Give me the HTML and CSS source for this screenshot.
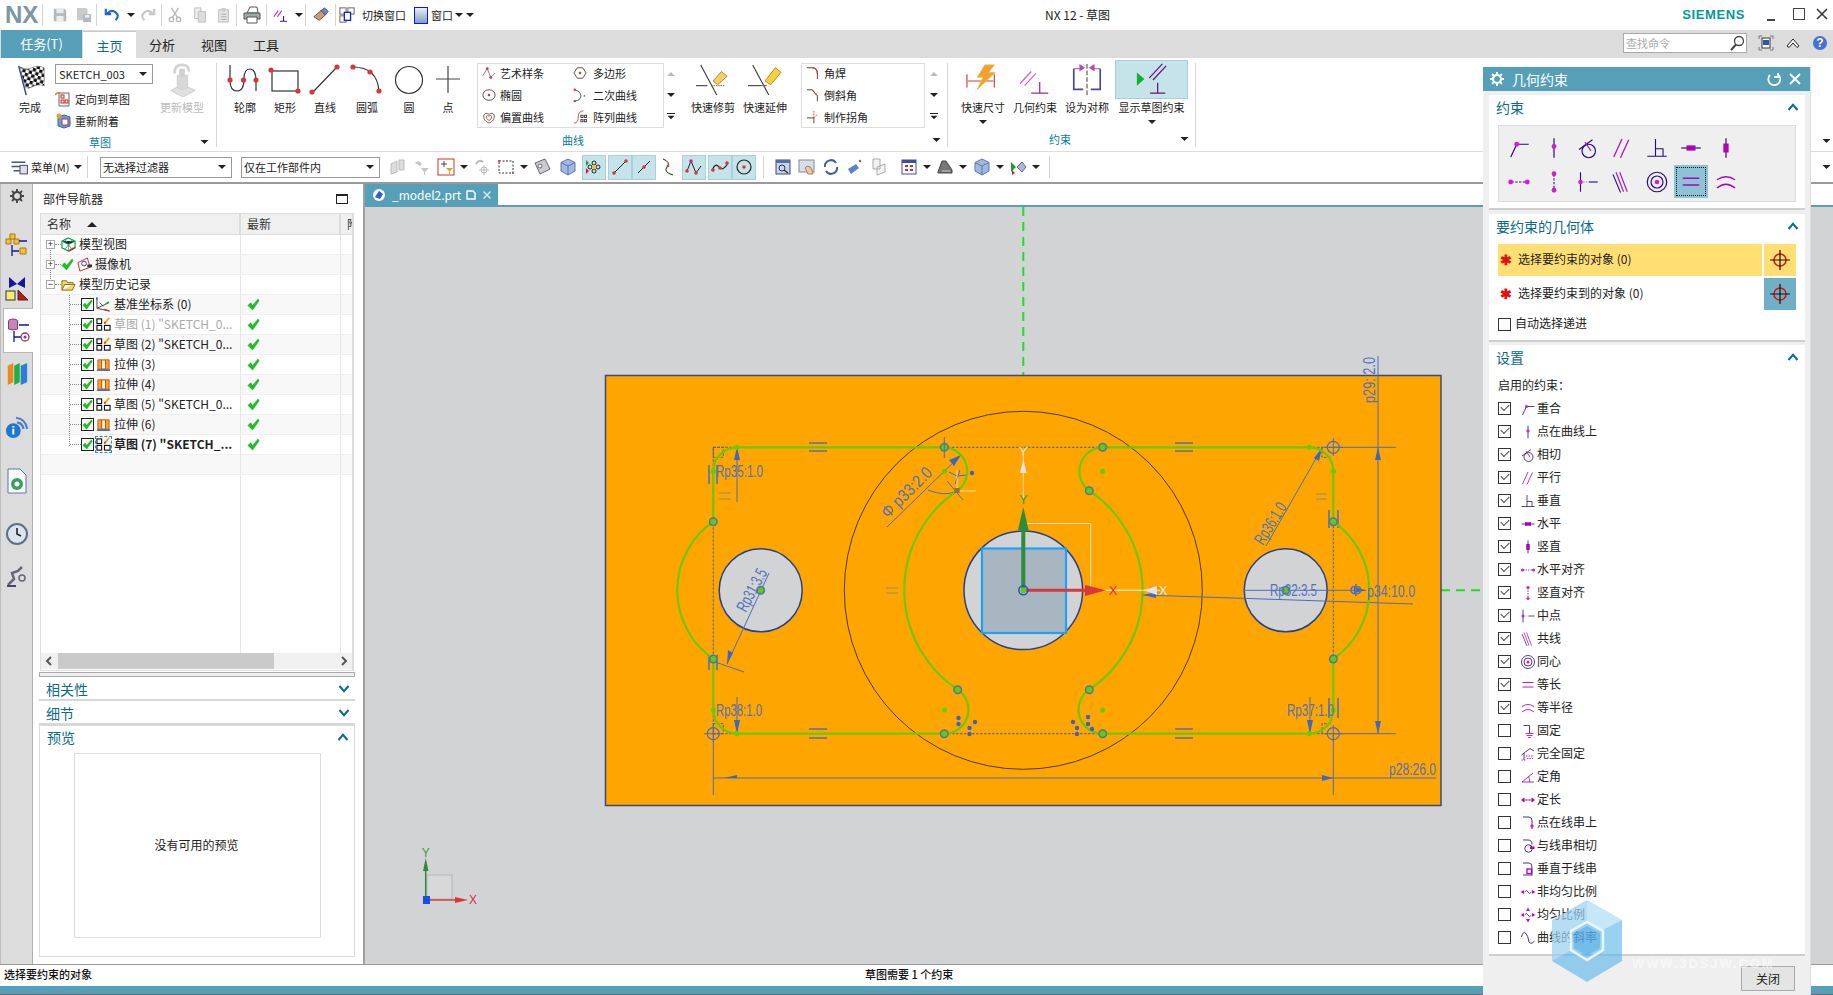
FILE: index.html
```html
<!DOCTYPE html>
<html lang="zh-CN">
<head>
<meta charset="utf-8">
<title>NX 12 - 草图</title>
<link rel="stylesheet" href="styles.css">
</head>
<body>
<svg class="sprite" xmlns="http://www.w3.org/2000/svg">
  <defs>
    <pattern id="chk" width="7" height="7" patternUnits="userSpaceOnUse" patternTransform="rotate(14)"><rect width="7" height="7" fill="#fff"/><rect width="3.500" height="3.500" fill="#111"/><rect x="3.500" y="3.500" width="3.500" height="3.500" fill="#111"/></pattern>
  </defs>
  <symbol id="c-coin" viewBox="0 0 32 32"><path d="M5 28 13 11H29" fill="none" stroke="#2a0a80" stroke-width="1.600"/><circle cx="13" cy="11" r="3.200" fill="#d818d8"/></symbol>
  <symbol id="c-onc" viewBox="0 0 32 32"><path d="M16 3V29" stroke="#2a0a80" stroke-width="1.600"/><circle cx="16" cy="14" r="3.200" fill="#d818d8"/></symbol>
  <symbol id="c-tan" viewBox="0 0 32 32"><circle cx="17" cy="20" r="9" fill="none" stroke="#2a0a80" stroke-width="1.600"/><path d="M4 18 22 5" stroke="#2a0a80" stroke-width="1.600"/><path d="M12 8 20 20" stroke="#a010c0" stroke-width="1.600"/></symbol>
  <symbol id="c-par" viewBox="0 0 32 32"><path d="M5 28 16 4M14 29 25 5" stroke="#a820b8" stroke-width="1.800"/></symbol>
  <symbol id="c-perp" viewBox="0 0 32 32"><path d="M3 27H29M14 4V27M14 17H24V27" fill="none" stroke="#2a0a80" stroke-width="1.500"/></symbol>
  <symbol id="c-hor" viewBox="0 0 32 32"><path d="M3 16H29" stroke="#2a0a80" stroke-width="1.600"/><rect x="10" y="12.500" width="12" height="7" fill="#b000b8"/></symbol>
  <symbol id="c-ver" viewBox="0 0 32 32"><path d="M16 3V29" stroke="#2a0a80" stroke-width="1.600"/><rect x="12.500" y="10" width="7" height="12" fill="#b000b8"/></symbol>
  <symbol id="c-hal" viewBox="0 0 32 32"><path d="M6 16H26" stroke="#2a0a80" stroke-width="1.400" stroke-dasharray="3 2"/><circle cx="5" cy="16" r="3.200" fill="#d818d8"/><circle cx="27" cy="16" r="3.200" fill="#d818d8"/></symbol>
  <symbol id="c-val" viewBox="0 0 32 32"><path d="M16 6V26" stroke="#2a0a80" stroke-width="1.400" stroke-dasharray="3 2"/><circle cx="16" cy="5" r="3.200" fill="#d818d8"/><circle cx="16" cy="27" r="3.200" fill="#d818d8"/></symbol>
  <symbol id="c-mid" viewBox="0 0 32 32"><path d="M6 3V29" stroke="#2a0a80" stroke-width="1.500"/><path d="M6 16H16" stroke="#777" stroke-width="1" stroke-dasharray="2 1.500"/><path d="M17 16H29" stroke="#2a0a80" stroke-width="1.500"/><circle cx="6" cy="16" r="3" fill="#d818d8"/></symbol>
  <symbol id="c-col" viewBox="0 0 32 32"><path d="M8 3 18 29M13 3 23 29" stroke="#a820b8" stroke-width="1.600"/><path d="M4 6 14 30" stroke="#2a0a80" stroke-width="1.400"/></symbol>
  <symbol id="c-con" viewBox="0 0 32 32"><circle cx="16" cy="16" r="13" fill="none" stroke="#2a0a80" stroke-width="1.600"/><circle cx="16" cy="16" r="8" fill="none" stroke="#2a0a80" stroke-width="1.600"/><circle cx="16" cy="16" r="3" fill="#d818d8"/></symbol>
  <symbol id="c-eq" viewBox="0 0 32 32"><path d="M5 11H27M5 20H27" stroke="#b000b8" stroke-width="1.800"/></symbol>
  <symbol id="c-eqr" viewBox="0 0 32 32"><path d="M4 13Q16 5 28 13M4 24Q16 14 28 24" fill="none" stroke="#b000b8" stroke-width="1.700"/></symbol>
  <symbol id="c-fix" viewBox="0 0 32 32"><path d="M7 5H19V21" fill="none" stroke="#2a0a80" stroke-width="1.600"/><path d="M11 21H27M13 25H25M16 29H22" stroke="#b000b8" stroke-width="1.600"/></symbol>
  <symbol id="c-ffx" viewBox="0 0 32 32"><path d="M3 18 20 5 28 10M8 14V28" fill="none" stroke="#2a0a80" stroke-width="1.600"/><path d="M12 20H28M14 25H26M3 28H12" stroke="#c010d0" stroke-width="1.800" stroke-dasharray="3 2"/></symbol>
  <symbol id="c-ang" viewBox="0 0 32 32"><path d="M4 26H28M4 26 26 8" fill="none" stroke="#b000b8" stroke-width="1.700"/><path d="M17 15Q20 20 19 26" fill="none" stroke="#b000b8" stroke-width="1.500"/></symbol>
  <symbol id="c-len" viewBox="0 0 32 32"><path d="M6 16H26" stroke="#b000b8" stroke-width="1.700"/><path d="M2 16 9 11V21ZM30 16 23 11V21Z" fill="#b000b8"/></symbol>
  <symbol id="c-ons" viewBox="0 0 32 32"><path d="M6 4H18Q24 4 24 12V28" fill="none" stroke="#2a0a80" stroke-width="1.700"/><circle cx="24" cy="22" r="3.400" fill="#d818d8"/></symbol>
  <symbol id="c-tns" viewBox="0 0 32 32"><path d="M6 4H16Q24 4 24 13" fill="none" stroke="#2a0a80" stroke-width="1.700"/><circle cx="17" cy="21" r="7.500" fill="none" stroke="#2a0a80" stroke-width="1.700"/><rect x="20" y="17" width="9" height="5" fill="#b000b8"/></symbol>
  <symbol id="c-pns" viewBox="0 0 32 32"><path d="M6 4H18Q24 4 24 12V29M6 28H24" fill="none" stroke="#2a0a80" stroke-width="1.700"/><rect x="14" y="16" width="9" height="9" fill="none" stroke="#b000b8" stroke-width="2.600"/></symbol>
  <symbol id="c-nus" viewBox="0 0 32 32"><path d="M9 16Q13 10 16 16T23 16" fill="none" stroke="#2a0a80" stroke-width="1.400"/><path d="M1 16 8 12V20ZM31 16 24 12V20Z" fill="#c010d0"/></symbol>
  <symbol id="c-uni" viewBox="0 0 32 32"><path d="M9 16Q13 10 16 16T23 16" fill="none" stroke="#2a0a80" stroke-width="1.400"/><path d="M1 16 8 12V20ZM31 16 24 12V20ZM16 1 12 8H20ZM16 31 12 24H20Z" fill="#c010d0"/></symbol>
  <symbol id="c-slp" viewBox="0 0 32 32"><path d="M3 14Q6 2 11 6T18 24Q22 30 29 22" fill="none" stroke="#2a0a80" stroke-width="1.700"/></symbol>
  <symbol id="ck" viewBox="0 0 14 14"><path d="M1 8 4 5 6 8 12 1 13 3 6 13Z" fill="#19c21e" stroke="#0f9a18" stroke-width=".5"/></symbol>
  <symbol id="sk" viewBox="0 0 16 16"><rect x="1" y="2" width="5" height="5" fill="none" stroke="#111" stroke-width="1.200"/><rect x="1" y="9" width="5" height="5" fill="none" stroke="#111" stroke-width="1.200"/><rect x="9" y="9" width="6" height="5" fill="none" stroke="#111" stroke-width="1.200"/><path d="M9 7 14 1" stroke="#e8b020" stroke-width="2.200"/><path d="M9 7 10 5" stroke="#d33" stroke-width="1.500"/></symbol>
  <symbol id="ex" viewBox="0 0 16 16"><path d="M2 3H14V13H2Z" fill="#f6a030" stroke="#d06010"/><path d="M6 3V13M10 3V13" stroke="#b05010"/><path d="M6.500 4H9.500V12H6.500Z" fill="#fff6d8"/><path d="M1 14H15" stroke="#2060d0" stroke-width="1.600"/></symbol>
  <symbol id="drop" viewBox="0 0 8 8"><path d="M0 2H8L4 6Z" fill="#222"/></symbol>
  <symbol id="cu" viewBox="0 0 12 8"><path d="M1.500 7 6 1.800 10.500 7" fill="none" stroke="#0a6c88" stroke-width="2"/></symbol>
  <symbol id="cd" viewBox="0 0 12 8"><path d="M1.500 1 6 6.200 10.500 1" fill="none" stroke="#0a6c88" stroke-width="2"/></symbol>
  <symbol id="cross" viewBox="0 0 20 20"><circle cx="10" cy="10" r="5.500" fill="none" stroke="#e01010" stroke-width="1.400"/><path d="M10 1V19M1 10H19" stroke="#111" stroke-width="1.100"/></symbol>
  <symbol id="gear" viewBox="0 0 16 16"><circle cx="8" cy="8" r="4.600" fill="none" stroke="currentColor" stroke-width="2.400"/><path d="M8 0V3M8 13V16M0 8H3M13 8H16M2.300 2.300 4.400 4.400M11.600 11.600 13.700 13.700M13.700 2.300 11.600 4.400M4.400 11.600 2.300 13.700" stroke="currentColor" stroke-width="2.200"/></symbol>
  <symbol id="box3d" viewBox="0 0 18 18"><path d="M9 1 16 4.500V13L9 17 2 13V4.500Z" fill="#9fb9e2" stroke="#5a76b0"/><path d="M2 4.500 9 8 16 4.500M9 8V17" fill="none" stroke="#5a76b0"/></symbol>
</svg>

<header class="titlebar">
  <span class="nx">NX</span><i class="sep"></i>
  <span class="qi qi-first"><svg viewBox="0 0 18 18" class="ic16"><path d="M2 2H14L16 4V16H2Z" fill="#b4b8bb"/><rect x="5" y="2" width="8" height="5" fill="#e7e9ea"/><rect x="5" y="10" width="8" height="6" fill="#eceeef"/></svg></span>
  <span class="qi"><svg viewBox="0 0 18 18" class="ic16"><path d="M1 1H11L13 3V9H9V15H1Z" fill="#c8cbce"/><rect x="8" y="8" width="9" height="9" fill="#b4b8bb"/><rect x="10" y="9" width="5" height="3" fill="#eee"/></svg></span><i class="sep"></i>
  <span class="qi qi-30"><svg viewBox="0 0 18 18" class="ic16"><path d="M2 2V8H8M3 8Q8 2 13 6T13 15" fill="none" stroke="#1768c8" stroke-width="2.400"/></svg></span>
  <svg class="dr dr-8"><use href="#drop"/></svg>
  <span class="qi qi-26"><svg viewBox="0 0 18 18" class="ic16"><path d="M16 2V8H10M15 8Q10 2 5 6T5 15" fill="none" stroke="#c4c8cb" stroke-width="2.400"/></svg></span><i class="sep"></i>
  <span class="qi qi-26"><svg viewBox="0 0 18 18" class="ic16"><path d="M13 1 6 12M5 1 12 12" stroke="#b8bcbe" stroke-width="1.600"/><circle cx="5" cy="14" r="2.500" fill="none" stroke="#b8bcbe" stroke-width="1.500"/><circle cx="13" cy="14" r="2.500" fill="none" stroke="#b8bcbe" stroke-width="1.500"/></svg></span>
  <span class="qi"><svg viewBox="0 0 18 18" class="ic16"><path d="M3 1H10V13H3Z" fill="#eee" stroke="#bbb"/><path d="M7 5H15V17H7Z" fill="#ddd" stroke="#bbb"/></svg></span>
  <span class="qi"><svg viewBox="0 0 18 18" class="ic16"><path d="M3 3H14V17H3Z" fill="#e4e4e4" stroke="#bbb"/><rect x="6" y="1" width="5" height="4" fill="#ccc"/><path d="M6 8H12M6 11H12M6 14H12" stroke="#aaa"/></svg></span><i class="sep"></i>
  <span class="qi qi-29"><svg viewBox="0 0 20 18" class="ic18"><path d="M5 7 8 1H15L16 7Z" fill="#fff" stroke="#555"/><path d="M2 7H18V13H2Z" fill="#9aa" stroke="#555"/><path d="M5 11H15V17H5Z" fill="#fff" stroke="#555"/></svg></span><i class="sep"></i>
  <span class="qi qi-26"><svg viewBox="0 0 18 18" class="ic16"><path d="M2 11 7 4M6 11 11 4" stroke="#c030d0" stroke-width="1.300"/><path d="M9 16H17M13 10V16" stroke="#3a10a0" stroke-width="1.200"/></svg></span>
  <svg class="dr dr-12"><use href="#drop"/></svg><i class="sep"></i>
  <span class="qi qi-29"><svg viewBox="0 0 18 18" class="ic16"><path d="M1 11 9 4 14 9 7 15Z" fill="#c8a070" stroke="#555"/><path d="M9 4 13 1 17 5 14 9Z" fill="#7084c8" stroke="#446"/></svg></span><i class="sep"></i>
  <span class="qi qi-22"><svg viewBox="0 0 18 18" class="ic16"><rect x="1" y="1" width="7" height="7" fill="#fff" stroke="#555"/><rect x="10" y="1" width="7" height="7" fill="#fff" stroke="#555"/><rect x="1" y="10" width="7" height="7" fill="#fff" stroke="#555"/><rect x="6" y="6" width="7" height="9" fill="#fff" stroke="#1414d8" stroke-width="1.400"/></svg></span>
  <span class="tb-text tb-text-1">切换窗口</span>
  <span class="win-ic"></span>
  <span class="tb-text tb-text-2">窗口</span>
  <svg class="dr dr-12"><use href="#drop"/></svg>
  <span class="more"><svg class="dr dr-8"><use href="#drop"/></svg></span>
  <span class="app-title">NX 12 - 草图</span>
  <span class="siemens">SIEMENS</span>
  <span class="winbtn-min"></span>
  <span class="winbtn-max"></span>
  <svg class="winbtn-close" viewBox="0 0 12 12"><path d="M1 1 11 11M11 1 1 11" stroke="#333" stroke-width="1.500"/></svg>
</header>

<nav class="tabbar">
  <span class="tab-task">任务(T)</span>
  <span class="tab tab-active">主页</span>
  <span class="tab">分析</span>
  <span class="tab">视图</span>
  <span class="tab">工具</span>
  <div class="search"><span>查找命令</span><svg viewBox="0 0 16 16"><circle cx="10" cy="6" r="4.500" fill="#fff" stroke="#444" stroke-width="1.300"/><path d="M7 9.500 2 15" stroke="#444" stroke-width="2"/></svg></div>
  <svg class="tb-ic" viewBox="0 0 16 16"><path d="M1 4V1H4M12 1H15V4M15 12V15H12M4 15H1V12" fill="none" stroke="#777"/><rect x="4" y="3" width="8" height="10" fill="#fff" stroke="#334"/><rect x="5" y="5" width="6" height="5" fill="#2a5aa0"/></svg>
  <svg class="tb-ic" viewBox="0 0 16 16"><path d="M2 11 8 4 14 11 12 12.500 8 8 4 12.500Z" fill="#fff" stroke="#222"/></svg>
  <svg class="tb-ic tb-help" viewBox="0 0 16 16"><circle cx="8" cy="8" r="7" fill="#4070d8"/><text x="8" y="12" text-anchor="middle" class="help-q">?</text></svg>
</nav>

<section class="ribbon">
  <div class="group g-sketch">
    <div class="gbody">
      <div class="tool t-finish">
        <svg class="ticon" viewBox="0 0 34 36"><path d="M5 3 13 34" stroke="#3a3ab0" stroke-width="1.500"/><path d="M6 4Q14 8 19 5T32 5L32 24Q24 22 20 25T12 26Z" fill="url(#chk)" stroke="#555" stroke-width=".5"/></svg>
        <span class="tlabel">完成</span>
      </div>
      <div class="sk-col">
        <div class="select select-sk"><span>SKETCH_003</span><svg><use href="#drop"/></svg></div>
        <div class="sk-item"><svg viewBox="0 0 16 16"><path d="M4 2H14V15H4Z" fill="#fff" stroke="#666"/><rect x="6" y="4" width="3" height="3" fill="none" stroke="#c22"/><rect x="6" y="9" width="3" height="3" fill="none" stroke="#c22"/><rect x="10" y="9" width="3" height="3" fill="none" stroke="#c22"/><path d="M0 4Q2 1 5 2" fill="none" stroke="#e08020" stroke-width="1.500"/></svg><span>定向到草图</span></div>
        <div class="sk-item"><svg viewBox="0 0 16 16"><path d="M3 4 9 2 15 4V13L9 15 3 13Z" fill="#5f9ed8" stroke="#3a6a9f"/><path d="M7 6H13V12H7Z" fill="#fff" stroke="#c33"/><circle cx="4" cy="3" r="2.500" fill="#e8a030"/></svg><span>重新附着</span></div>
      </div>
      <div class="tool t-update">
        <svg class="ticon" viewBox="0 0 34 36"><path d="M5 29 17 23 31 29 18 36Z" fill="#e0e0e0" stroke="#ccc"/><path d="M12 13H23V26L18 28 12 26Z" fill="#d8d8d8" stroke="#ccc"/><path d="M9 11Q9 2 17 2T24 9" fill="none" stroke="#d4d4d4" stroke-width="3"/><rect x="14" y="6" width="6" height="9" fill="#cfcfcf"/></svg>
        <span class="tlabel tlabel-off">更新模型</span>
      </div>
    </div>
    <div class="gfoot foot-sketch"><span>草图</span><svg class="dr dr-f"><use href="#drop"/></svg></div>
  </div>

  <div class="group g-curve">
    <div class="gbody">
      <div class="tool t-40"><svg class="ticon" viewBox="0 0 36 34"><path d="M3 2V17Q3 28 10 28T17 16Q17 6 23 6T29 18V28" fill="none" stroke="#333" stroke-width="1.200"/><circle cx="3" cy="17" r="2.600" fill="#d23a3a"/><circle cx="16.500" cy="17" r="2.600" fill="#d23a3a"/><circle cx="29" cy="17" r="2.600" fill="#d23a3a"/></svg><span class="tlabel">轮廓</span></div>
      <div class="tool t-40"><svg class="ticon" viewBox="0 0 36 34"><rect x="5" y="8" width="26" height="20" fill="none" stroke="#333" stroke-width="1.200"/><circle cx="4" cy="7" r="2.600" fill="#d23a3a"/><circle cx="31" cy="28" r="2.600" fill="#d23a3a"/></svg><span class="tlabel">矩形</span></div>
      <div class="tool t-40"><svg class="ticon" viewBox="0 0 36 34"><path d="M6 29 30 4" stroke="#333" stroke-width="1.200"/><circle cx="5" cy="29" r="2.600" fill="#d23a3a"/><circle cx="30" cy="4" r="2.600" fill="#d23a3a"/></svg><span class="tlabel">直线</span></div>
      <div class="tool t-44"><svg class="ticon" viewBox="0 0 36 34"><path d="M4 4Q28 4 30 28" fill="none" stroke="#333" stroke-width="1.200"/><circle cx="4" cy="4" r="2.600" fill="#d23a3a"/><circle cx="21" cy="9" r="2.600" fill="#d23a3a"/><circle cx="30" cy="28" r="2.600" fill="#d23a3a"/></svg><span class="tlabel">圆弧</span></div>
      <div class="tool t-40"><svg class="ticon" viewBox="0 0 36 34"><circle cx="18" cy="17" r="13.500" fill="none" stroke="#333" stroke-width="1.200"/></svg><span class="tlabel">圆</span></div>
      <div class="tool t-38"><svg class="ticon" viewBox="0 0 36 34"><path d="M18 3V30M6 16H30" stroke="#444" stroke-width="1.200"/></svg><span class="tlabel">点</span></div>
      <div class="gallery gal-1">
        <div class="gal-item"><svg viewBox="0 0 16 16"><path d="M1 11 6 3 10 13 15 8" fill="none" stroke="#777"/><circle cx="6" cy="3" r="1.600" fill="#d23a3a"/><circle cx="10" cy="13" r="1.600" fill="#d23a3a"/></svg><span>艺术样条</span></div>
        <div class="gal-item"><svg viewBox="0 0 16 16"><path d="M5 2H11L15 8 11 14H5L1 8Z" fill="none" stroke="#444"/><circle cx="8" cy="8" r="1.500" fill="#d23a3a"/></svg><span>多边形</span></div>
        <div class="gal-item"><svg viewBox="0 0 16 16"><ellipse cx="8" cy="8" rx="7" ry="6" fill="none" stroke="#444"/><circle cx="8" cy="8" r="1.500" fill="#d23a3a"/></svg><span>椭圆</span></div>
        <div class="gal-item"><svg viewBox="0 0 16 16"><path d="M2 2Q9 4 9 9T2 15" fill="none" stroke="#444"/><circle cx="2" cy="2" r="1.400" fill="#d23a3a"/><circle cx="2" cy="15" r="1.400" fill="#d23a3a"/><circle cx="13" cy="9" r="1" fill="#777"/></svg><span>二次曲线</span></div>
        <div class="gal-item"><svg viewBox="0 0 16 16"><path d="M8 15Q1 12 2 6 4 2 8 5 12 2 14 6 15 12 8 15Z" fill="none" stroke="#555"/><path d="M8 12Q4 10 5 7 6 5 8 7 10 5 11 7 12 10 8 12Z" fill="none" stroke="#d23a3a"/></svg><span>偏置曲线</span></div>
        <div class="gal-item"><svg viewBox="0 0 16 16"><path d="M1 15Q6 15 6 8T12 1" fill="none" stroke="#d23a3a"/><g fill="none" stroke="#333"><rect x="9" y="6" width="2.500" height="2.500"/><rect x="13" y="6" width="2.500" height="2.500"/><rect x="9" y="11" width="2.500" height="2.500"/><rect x="13" y="11" width="2.500" height="2.500"/></g></svg><span>阵列曲线</span></div>
      </div>
      <div class="gal-arrows gal-arrows-1"><svg class="up"><use href="#drop"/></svg><svg><use href="#drop"/></svg><svg class="mr"><use href="#drop"/></svg></div>
      <div class="tool t-52 t-trim"><svg class="ticon" viewBox="0 0 36 36"><path d="M5 2 22 34" stroke="#333" stroke-width="1.100"/><path d="M0 24H12" stroke="#333" stroke-width="1.100"/><path d="M16 24H30" stroke="#555" stroke-width="1" stroke-dasharray="1.500 1"/><path d="M18 19 27 9 33 14 23 23Z" fill="#f2d060" stroke="#c08030"/></svg><span class="tlabel">快速修剪</span></div>
      <div class="tool t-52"><svg class="ticon" viewBox="0 0 36 36"><path d="M5 2 22 34" stroke="#333" stroke-width="1.100"/><path d="M0 24H14" stroke="#333" stroke-width="1.100"/><path d="M14 24H20" stroke="#c33" stroke-width="1.100"/><path d="M18 19 29 5 35 10 24 23Z" fill="#f4d23a" stroke="#c08030"/></svg><span class="tlabel">快速延伸</span></div>
      <div class="gallery gal-2">
        <div class="gal-item"><svg viewBox="0 0 16 16"><path d="M1 2H7Q13 2 13 9V15" fill="none" stroke="#333"/><path d="M7 2Q13 2 13 9" fill="none" stroke="#d23a3a" stroke-width="1.300"/></svg><span>角焊</span></div>
        <div class="gal-item"><svg viewBox="0 0 16 16"><path d="M1 2H7L13 9V15" fill="none" stroke="#333"/><path d="M7 2 13 9" fill="none" stroke="#d23a3a" stroke-width="1.300" stroke-dasharray="2 1"/></svg><span>倒斜角</span></div>
        <div class="gal-item"><svg viewBox="0 0 16 16"><path d="M1 9H9V15" fill="none" stroke="#333"/><path d="M9 9 13 5M9 1V9" stroke="#d23a3a" stroke-dasharray="2 1"/></svg><span>制作拐角</span></div>
      </div>
      <div class="gal-arrows gal-arrows-2"><svg class="up"><use href="#drop"/></svg><svg><use href="#drop"/></svg><svg class="mr"><use href="#drop"/></svg></div>
    </div>
    <div class="gfoot foot-curve"><span>曲线</span><svg class="dr dr-f"><use href="#drop"/></svg></div>
  </div>

  <div class="group g-con">
    <div class="gbody">
      <div class="tool t-52"><svg class="ticon" viewBox="0 0 36 36"><path d="M1 12V26M30 12V26M2 19H29" stroke="#d23a3a" stroke-width="1.200"/><path d="M20 2H30L24 10H31L12 28 18 15H12Z" fill="#f0a030" stroke="#e8c040"/></svg><span class="tlabel">快速尺寸</span><svg class="dr dr-t"><use href="#drop"/></svg></div>
      <div class="tool t-52"><svg class="ticon" viewBox="0 0 36 36"><path d="M2 22 14 9M7 24 19 11" stroke="#cf60d8" stroke-width="1.300"/><path d="M14 32H32M23 20V32" stroke="#a020b0" stroke-width="1.300"/></svg><span class="tlabel">几何约束</span></div>
      <div class="tool t-52"><svg class="ticon" viewBox="0 0 36 36"><path d="M4 6V28H14M32 6V28H22" fill="none" stroke="#4a4a9a" stroke-width="1.800"/><path d="M4 6H12M32 6H24" stroke="#8888a8" stroke-width="1.200"/><path d="M18 1V35" stroke="#333" stroke-width="1" stroke-dasharray="5 2"/><path d="M10 1V9L16 5ZM26 1V9L20 5Z" fill="#c040c8"/></svg><span class="tlabel">设为对称</span></div>
      <div class="tool tool-on"><span class="on-bg"><svg class="ticon" viewBox="0 0 36 36"><path d="M2 10V24L10 17Z" fill="#10b030"/><path d="M15 16 29 1M19 18 33 3" stroke="#6a1078" stroke-width="1.300"/><path d="M16 32H32M24 21V32" stroke="#6a1078" stroke-width="1.300"/></svg></span><span class="tlabel">显示草图约束</span><svg class="dr dr-t"><use href="#drop"/></svg></div>
    </div>
    <div class="gfoot foot-con"><span>约束</span><svg class="dr dr-f"><use href="#drop"/></svg></div>
  </div>
  <svg class="dr dr-end"><use href="#drop"/></svg>
</section>

<section class="selbar">
  <svg class="menu-ic" viewBox="0 0 18 16"><path d="M1 3H14M1 7H12M3 11H14" stroke="#457" stroke-width="1.500"/><rect x="9" y="6" width="7" height="8" fill="#dde" stroke="#556"/></svg>
  <span class="menu-text">菜单(M)</span>
  <svg class="dr dr-12"><use href="#drop"/></svg>
  <i class="sep sep-menu"></i>
  <div class="select select-f1"><span>无选择过滤器</span><svg><use href="#drop"/></svg></div>
  <div class="select select-f2"><span>仅在工作部件内</span><svg><use href="#drop"/></svg></div>
  <span class="si si-first"><svg viewBox="0 0 18 18"><path d="M2 6 8 3V14L2 16ZM10 2H15V12H10Z" fill="#ddd" stroke="#bbb"/></svg></span>
  <span class="si"><svg viewBox="0 0 18 18"><path d="M2 5Q6 1 9 6L7 8 4 6ZM8 10H16L12 14V17H11V14Z" fill="#c4c4c4"/></svg></span>
  <span class="si"><svg viewBox="0 0 18 18"><rect x="1" y="1" width="16" height="16" fill="#fff" stroke="#c33"/><path d="M7 3V9M4 6H10" stroke="#444"/><path d="M9 10H16L13 13V16H12V13Z" fill="#e8a020"/></svg></span>
  <svg class="dr dr-12"><use href="#drop"/></svg>
  <span class="si"><svg viewBox="0 0 18 18"><path d="M3 6Q6 1 10 4" fill="none" stroke="#bbb" stroke-width="2"/><circle cx="11" cy="12" r="3" fill="none" stroke="#bbb"/><path d="M11 7V17M6 12H16" stroke="#bbb"/></svg></span>
  <span class="si"><svg viewBox="0 0 18 18"><rect x="2" y="3" width="14" height="12" fill="none" stroke="#333" stroke-dasharray="2 1.500"/><circle cx="2" cy="3" r="1" fill="#c33"/><circle cx="16" cy="15" r="1" fill="#c33"/></svg></span>
  <svg class="dr dr-12"><use href="#drop"/></svg>
  <span class="si"><svg viewBox="0 0 18 18"><path d="M2 5 12 1 17 11 7 16Z" fill="#ccc" stroke="#667"/><circle cx="7" cy="8" r="2" fill="#fff" stroke="#667"/></svg></span>
  <span class="si si-m2"><svg viewBox="0 0 18 18"><use href="#box3d"/></svg></span>
  <span class="si si-m2 si-on"><svg viewBox="0 0 18 18"><circle cx="5" cy="9" r="2" fill="none" stroke="#222"/><circle cx="13" cy="9" r="2" fill="none" stroke="#222"/><circle cx="9" cy="5" r="2" fill="none" stroke="#222"/><circle cx="9" cy="13" r="2" fill="none" stroke="#222"/><circle cx="9" cy="9" r="2" fill="#f0c020"/><path d="M1 2 4 5 1 8Z" fill="#19a030"/><path d="M1 10 4 13 1 16Z" fill="#d02020"/></svg></span>
  <span class="si si-m2 si-on"><svg viewBox="0 0 18 18"><path d="M3 15 15 3" stroke="#222"/><circle cx="15" cy="3" r="1.800" fill="#d23a3a"/><circle cx="3" cy="15" r="1.800" fill="#d23a3a"/></svg></span>
  <span class="si si-on"><svg viewBox="0 0 18 18"><path d="M3 15 15 3" stroke="#222"/><circle cx="9" cy="9" r="1.800" fill="#d23a3a"/></svg></span>
  <span class="si"><svg viewBox="0 0 18 18"><path d="M4 1Q12 4 8 9T14 17" fill="none" stroke="#222"/><circle cx="9" cy="8" r="1.300" fill="#d23a3a"/></svg></span>
  <span class="si si-m2 si-on"><svg viewBox="0 0 18 18"><path d="M2 13 6 3 11 15 16 8" fill="none" stroke="#222"/><circle cx="6" cy="3" r="1.800" fill="#d02090"/><circle cx="11" cy="15" r="1.800" fill="#d23a3a"/><circle cx="2" cy="13" r="1.800" fill="#d23a3a"/></svg></span>
  <span class="si si-m2 si-on"><svg viewBox="0 0 18 18"><path d="M1 13Q4 4 8 9T17 5" fill="none" stroke="#222" stroke-width="1.200"/><circle cx="2" cy="12" r="1.800" fill="#d23a3a"/><circle cx="9" cy="10" r="1.800" fill="#d23a3a"/><circle cx="16" cy="5" r="1.800" fill="#d23a3a"/></svg></span>
  <span class="si si-on"><svg viewBox="0 0 18 18"><circle cx="9" cy="9" r="7" fill="none" stroke="#222" stroke-width="1.200"/><circle cx="9" cy="9" r="1.800" fill="#d23a3a"/></svg></span>
  <i class="sep sep-s"></i>
  <span class="si si-m7"><svg viewBox="0 0 18 18"><rect x="2" y="2" width="14" height="14" fill="#c8d4ea" stroke="#446"/><rect x="2" y="2" width="14" height="3" fill="#5070a8"/><circle cx="8" cy="10" r="3" fill="none" stroke="#335"/><path d="M10 12 14 15" stroke="#335" stroke-width="1.500"/></svg></span>
  <span class="si"><svg viewBox="0 0 18 18"><rect x="1" y="2" width="15" height="12" fill="#d9dfe8" stroke="#889"/><path d="M9 8Q13 8 14 12L15 16H10L7 10Z" fill="#e8c8a0" stroke="#aa8060"/></svg></span>
  <span class="si"><svg viewBox="0 0 18 18"><path d="M3 9A6 6 0 0 1 14 5M15 9A6 6 0 0 1 4 13" fill="none" stroke="#3a60a8" stroke-width="2"/></svg></span>
  <span class="si"><svg viewBox="0 0 18 18"><path d="M2 11 10 6 13 10 5 16Z" fill="#5a80d0"/><circle cx="14" cy="3" r="1.200" fill="#d23a3a"/></svg></span>
  <span class="si"><svg viewBox="0 0 18 18"><path d="M3 1H10V11H3ZM7 9 15 6V14L7 17Z" fill="#f2f2f2" stroke="#aaa"/></svg></span>
  <span class="si si-m6"><svg viewBox="0 0 18 18"><rect x="2" y="2" width="14" height="14" fill="#fff" stroke="#3a50a0"/><rect x="2" y="2" width="14" height="3" fill="#3a50a0"/><g fill="#d03030"><rect x="5" y="7" width="3" height="2"/><rect x="10" y="7" width="3" height="2"/><rect x="5" y="11" width="3" height="2"/><rect x="10" y="11" width="3" height="2"/></g></svg></span>
  <svg class="dr dr-12"><use href="#drop"/></svg>
  <span class="si"><svg viewBox="0 0 18 18"><path d="M2 14 6 3H10L16 12V15H2Z" fill="#777" stroke="#444"/><path d="M6 13H14" stroke="#ccc"/></svg></span>
  <svg class="dr dr-12"><use href="#drop"/></svg>
  <span class="si si-m1"><svg viewBox="0 0 18 18"><use href="#box3d"/></svg></span>
  <svg class="dr dr-12"><use href="#drop"/></svg>
  <span class="si"><svg viewBox="0 0 18 18"><path d="M2 4 7 9 2 14Z" fill="#19a030"/><path d="M3 12 6 15 3 17Z" fill="#d02020"/><path d="M8 9 13 4 17 9 13 14Z" fill="#a8b8e0" stroke="#667"/></svg></span>
  <svg class="dr dr-12"><use href="#drop"/></svg>
  <i class="sep sep-s"></i>
  <svg class="dr dr-end"><use href="#drop"/></svg>
</section>

<main class="workspace">
  <aside class="rail">
    <div class="rail-item ri-gear"><svg class="rail-gear"><use href="#gear"/></svg></div>
    <div class="rail-item ri-asm"><svg viewBox="0 0 24 26"><g fill="#f2c230" stroke="#a87810"><path d="M5 2H10V7H5ZM1 7H6V12H1ZM9 7H14V12H9ZM15 16H21V22H15Z"/></g><path d="M7 13V24M7 19H14M14 9H22" stroke="#1414a0" stroke-width="1.300"/></svg></div>
    <div class="rail-item ri-con"><svg viewBox="0 0 24 26"><path d="M4 1 12 8 20 1V12L12 8 4 12Z" fill="#1414a0"/><rect x="1" y="15" width="9" height="9" fill="#f7ee6a" stroke="#333"/><path d="M13 24V14L23 24Z" fill="#c81414" stroke="#333"/></svg></div>
    <div class="rail-item ri-part"><svg viewBox="0 0 24 26"><ellipse cx="6" cy="3" rx="4.500" ry="2" fill="#d080b8" stroke="#804070"/><path d="M1.500 3V11Q6 13 10.500 11V3" fill="#d080b8" stroke="#804070"/><path d="M7 13V24M7 19H14M12 7H22" stroke="#1414a0" stroke-width="1.300"/><circle cx="18" cy="19" r="4" fill="none" stroke="#804070" stroke-width="1.300"/><circle cx="18" cy="19" r="1.500" fill="#804070"/></svg></div>
    <div class="rail-item ri-books"><svg viewBox="0 0 26 26"><path d="M3 4 9 1V22L3 25Z" fill="#e88a20"/><path d="M10 4 16 1V22L10 25Z" fill="#20b040"/><path d="M17 4 24 1V22L17 25Z" fill="#2a80d8"/></svg></div>
    <div class="rail-item ri-info"><svg viewBox="0 0 26 26"><path d="M12 3Q22 4 24 15M13 8Q19 9 20 15" fill="none" stroke="#4a7ed0" stroke-width="2.400"/><circle cx="9" cy="17" r="8" fill="#1f78d0"/><path d="M9 15V21M9 12V13.500" stroke="#fff" stroke-width="2.200"/></svg></div>
    <div class="rail-item ri-doc"><svg viewBox="0 0 24 26"><path d="M3 1H15L21 7V25H3Z" fill="#fff" stroke="#5577b0"/><circle cx="12" cy="16" r="6" fill="#3aa060"/><circle cx="12" cy="16" r="2.500" fill="#fff"/></svg></div>
    <div class="rail-item ri-clock"><svg viewBox="0 0 24 24"><circle cx="12" cy="12" r="10" fill="#dbe4ef" stroke="#5f6f88" stroke-width="2"/><path d="M12 6V12L16 14" fill="none" stroke="#223" stroke-width="1.600"/></svg></div>
    <div class="rail-item ri-robot"><svg viewBox="0 0 24 24"><path d="M3 21 9 15 7 9 13 7 17 3" fill="none" stroke="#667" stroke-width="2.500"/><circle cx="17" cy="14" r="3" fill="none" stroke="#667" stroke-width="1.500"/><path d="M2 22H11" stroke="#446" stroke-width="2"/></svg></div>
  </aside>

  <div class="nav">
    <div class="nav-title"><span>部件导航器</span><i class="nav-max"></i></div>
    <div class="tree">
      <div class="tree-head"><span class="hc hc-name">名称<i class="sort"></i></span><span class="hc hc-new">最新</span><span class="hc hc-x">附</span></div>
      <div class="tree-body">
        <i class="guide guide-1"></i><i class="guide guide-2"></i>
        <div class="row"><div class="c1"><b class="exp">+</b><i class="stub stub-6"></i><svg class="ric" viewBox="0 0 16 16"><path d="M8 1 15 4.500V11.500L8 15 1 11.500V4.500Z" fill="none" stroke="#10a060" stroke-width="1.300"/><path d="M1 4.500 8 8 15 4.500M8 8V15M4.500 3 11.500 13M11.500 3 4.500 13" stroke="#10a060" stroke-width=".8"/><path d="M8 15 15 11" stroke="#d02020" stroke-width="1.500"/></svg><span class="rtxt">模型视图</span></div><div class="c2"></div><div class="c3"></div></div>
        <div class="row alt"><div class="c1"><b class="exp">+</b><i class="stub stub-6"></i><svg class="ck-s"><use href="#ck"/></svg><svg class="ric ric-cam" viewBox="0 0 16 16"><path d="M1 6 11 1 14 11 3 15Z" fill="#fff" stroke="#d02020"/><circle cx="7.500" cy="7" r="2.500" fill="none" stroke="#2030b0"/><path d="M11 8H16V11H11Z" fill="#333"/></svg><span class="rtxt">摄像机</span></div><div class="c2"></div><div class="c3"></div></div>
        <div class="row"><div class="c1"><b class="exp">−</b><i class="stub stub-6"></i><svg class="ric" viewBox="0 0 16 16"><path d="M1 14V4H6L7 6H13V8H4L1 14H12L15 8H13" fill="#f5d76a" stroke="#8a6a10"/></svg><span class="rtxt">模型历史记录</span></div><div class="c2"></div><div class="c3"></div></div>
        <div class="row alt"><div class="c1 c1-ch"><i class="stub stub-10"></i><i class="vis"><svg><use href="#ck"/></svg></i><svg class="ric" viewBox="0 0 16 16"><path d="M1 1V12L14 6M1 12 14 15M4 6 8 10" fill="none" stroke="#444"/><path d="M1 3V0" stroke="#14a"/><path d="M9 13 15 15" stroke="#d02020"/><path d="M10 7 14 5" stroke="#19a030"/></svg><span class="rtxt">基准坐标系 (0)</span></div><div class="c2"><svg class="ck-s"><use href="#ck"/></svg></div><div class="c3"></div></div>
        <div class="row"><div class="c1 c1-ch"><i class="stub stub-10"></i><i class="vis"><svg><use href="#ck"/></svg></i><svg class="ric"><use href="#sk"/></svg><span class="rtxt rtxt-off">草图 (1) "SKETCH_0...</span></div><div class="c2"><svg class="ck-s"><use href="#ck"/></svg></div><div class="c3"></div></div>
        <div class="row alt"><div class="c1 c1-ch"><i class="stub stub-10"></i><i class="vis"><svg><use href="#ck"/></svg></i><svg class="ric"><use href="#sk"/></svg><span class="rtxt">草图 (2) "SKETCH_0...</span></div><div class="c2"><svg class="ck-s"><use href="#ck"/></svg></div><div class="c3"></div></div>
        <div class="row"><div class="c1 c1-ch"><i class="stub stub-10"></i><i class="vis"><svg><use href="#ck"/></svg></i><svg class="ric"><use href="#ex"/></svg><span class="rtxt">拉伸 (3)</span></div><div class="c2"><svg class="ck-s"><use href="#ck"/></svg></div><div class="c3"></div></div>
        <div class="row alt"><div class="c1 c1-ch"><i class="stub stub-10"></i><i class="vis"><svg><use href="#ck"/></svg></i><svg class="ric"><use href="#ex"/></svg><span class="rtxt">拉伸 (4)</span></div><div class="c2"><svg class="ck-s"><use href="#ck"/></svg></div><div class="c3"></div></div>
        <div class="row"><div class="c1 c1-ch"><i class="stub stub-10"></i><i class="vis"><svg><use href="#ck"/></svg></i><svg class="ric"><use href="#sk"/></svg><span class="rtxt">草图 (5) "SKETCH_0...</span></div><div class="c2"><svg class="ck-s"><use href="#ck"/></svg></div><div class="c3"></div></div>
        <div class="row alt"><div class="c1 c1-ch"><i class="stub stub-10"></i><i class="vis"><svg><use href="#ck"/></svg></i><svg class="ric"><use href="#ex"/></svg><span class="rtxt">拉伸 (6)</span></div><div class="c2"><svg class="ck-s"><use href="#ck"/></svg></div><div class="c3"></div></div>
        <div class="row"><div class="c1 c1-ch"><i class="stub stub-10"></i><i class="vis"><svg><use href="#ck"/></svg></i><svg class="ric ric-act"><use href="#sk"/></svg><span class="rtxt rtxt-b">草图 (7) "SKETCH_...</span></div><div class="c2"><svg class="ck-s"><use href="#ck"/></svg></div><div class="c3"></div></div>
        <div class="row alt"><div class="c1"></div><div class="c2"></div><div class="c3"></div></div>
        <div class="row-fill"><div class="c1"></div><div class="c2"></div><div class="c3"></div></div>
      </div>
      <div class="hscroll"><svg class="sb-arrow" viewBox="0 0 8 10"><path d="M6 1 2 5 6 9" fill="none" stroke="#555" stroke-width="2"/></svg><i class="sb-thumb"></i><svg class="sb-arrow sb-arrow-r" viewBox="0 0 8 10"><path d="M2 1 6 5 2 9" fill="none" stroke="#555" stroke-width="2"/></svg></div>
    </div>
    <div class="splitter"></div>
    <div class="nav-sec"><span>相关性</span><svg class="chev"><use href="#cd"/></svg></div>
    <div class="nav-sec nav-sec-2"><span>细节</span><svg class="chev"><use href="#cd"/></svg></div>
    <div class="preview">
      <div class="preview-head"><span>预览</span><svg class="chev"><use href="#cu"/></svg></div>
      <div class="preview-box">没有可用的预览</div>
    </div>
  </div>

  <div class="stage">
    <div class="doctabs"><div class="doctab"><svg class="doc-ic" viewBox="0 0 14 14"><circle cx="7" cy="7" r="6" fill="#fff"/><path d="M3 9 7 3 11 6 8 11Z" fill="#2a60c8"/></svg><span class="doc-name">_model2.prt</span><svg class="doc-s" viewBox="0 0 10 10"><path d="M1 1H7L9 3V9H1Z" fill="none" stroke="#fff" stroke-width="1.400"/></svg><svg class="doc-s" viewBox="0 0 10 10"><path d="M1.500 1.500 8.500 8.500M8.500 1.500 1.500 8.500" stroke="#d8eef4" stroke-width="1.400"/></svg></div></div>
    <div class="canvas">
      <svg class="sketch" viewBox="365 207 1468 757" xmlns="http://www.w3.org/2000/svg">
        <path class="axis-dash" d="M1023.300 207V375M1441 590.300H1483"/>
        <rect x="605.500" y="375.500" width="835.500" height="430" class="plate"/>
        <circle cx="1023.300" cy="590.300" r="179" class="bigc"/>
        <circle cx="1023.300" cy="590.300" r="59.300" class="hole"/>
        <circle cx="760.700" cy="590.300" r="41.500" class="hole"/>
        <circle cx="1285.700" cy="590.300" r="41.500" class="hole"/>
        <rect x="982" y="548.500" width="84" height="84.500" class="csq"/>

        <g class="ghost">
          <path d="M1023.300 523.500H1090.700V590.300M1023.300 590.300H1157"/>
        </g>
        <path class="dim-d" d="M713.300 447.300H736M713.300 447.300V733.700M944 447.300H1103M944 733.700H1103M713 733.700H736M1309 447.300H1333.300M1309 733.700H1333.300M1333.300 521.700V659"/>
        <path class="dim-d" d="M713.300 447.300h10v10h-10zM713.300 733.700h10v-10h-10zM1322 447.300v10h10M1322 733.700v-10h10"/>

        <!-- dimension lines -->
        <g class="dim">
          <path d="M713.300 733.700V795M1333.300 733.700V795M713.300 778H1333.300M1333.300 778H1436"/>
          <path d="M1378 356V733.700M1333.300 447.300H1396M1333.300 733.700H1396"/>
          <path d="M737 447.300V502M737 697V733.700M1310 697V733.700"/>
          <path d="M887 527 961 455"/>
          <path d="M769 573 727 664M718 663 744 672"/>
          <path d="M1266 546 1322 448"/>
          <path d="M1243 590.300H1366"/>
          <path d="M1143 595 1413 604"/>
          <path d="M928 490Q945 497 957 491"/>
          <path d="M947 481 963 500M949 472 957 476 967 475M955 484 960 470"/>
        </g>
        <path class="dim-a" d="M737 447 734 460H740ZM1378 447 1375 460H1381ZM1378 733.700 1375 721H1381ZM724 778H737V775ZM1333 778 1322 775V781ZM1322 448 1314 458 1319 461ZM727 664 728 650 733 653ZM961 455 949 460 954 466ZM1143 595 1156 592V598ZM1366 590.300 1354 587V593ZM737 733.700 734 720H740ZM1310 733.700 1307 720H1313Z"/>
        <g class="bars"><path d="M709 465V484M717 465V484M709 655V670M717 655V670M1329 510V528M1338 510V528M1329 698V718M1338 698V718"/></g>
        <g class="eqm"><path d="M809 443H827M809 451H827M809 729H827M809 738H827M1175 443H1193M1175 451H1193M1175 729H1193M1175 738H1193"/></g>
        <g class="eqm-b"><path d="M719 493H731M719 499H731M886 588H898M886 593H898M1316 494H1327M1316 499H1327M1149 588H1162M1149 593H1162"/></g>

        <!-- outline -->
        <g class="outline">
          <path d="M736.700 447.300H944.300A24 24 0 0 1 957.300 490.700A119.600 119.600 0 0 0 957.700 689.700A24 24 0 0 1 944.300 733.700H736.700A24 24 0 0 1 713.300 710V659A83.400 83.400 0 0 1 713.300 521.700V471.300A24 24 0 0 1 736.700 447.300Z"/>
          <path d="M1102.700 447.300H1309.300A24 24 0 0 1 1333.300 471.300V521.700A83.400 83.400 0 0 1 1333.300 659V710A24 24 0 0 1 1309.300 733.700H1102.700A24 24 0 0 1 1089.300 689.700A119.600 119.600 0 0 0 1089.300 490.700A24 24 0 0 1 1102.700 447.300Z"/>
        </g>

        <!-- csys -->
        <path d="M1023.300 590.300V522" class="yaxis"/><path d="M1023.300 507 1018 530H1028.600Z" class="ygreen"/>
        <path d="M1023.300 590.300H1086" class="xaxis"/><path d="M1106 590.300 1085 585V596Z" class="xred"/>
        <path d="M1023.300 500V456" class="ghost-l"/><path d="M1023.300 459 1020 473H1026.600Z" class="ghost-f"/>
        <path d="M1106 590.300H1160" class="ghost-l"/><path d="M1143 590.300 1157 586V595Z" class="ghost-f"/>
        <circle cx="1023.300" cy="590.300" r="4.500" class="o-mark"/>
        <text x="1023.300" y="456" class="lbl lbl-gh">Y</text>
        <text x="1023.300" y="504" class="lbl lbl-gr">Y</text>
        <text x="1113" y="595" class="lbl lbl-r">X</text>
        <text x="1163" y="595" class="lbl lbl-gh">X</text>

        <!-- points -->
        <g class="pt-o"><circle cx="713.300" cy="521.700" r="4.500"/><circle cx="944.300" cy="447.300" r="4.500"/><circle cx="944.300" cy="733.700" r="4.500"/><circle cx="957.700" cy="689.700" r="4.500"/><circle cx="1102.700" cy="447.300" r="4.500"/><circle cx="1102.700" cy="733.700" r="4.500"/><circle cx="1089.300" cy="490.700" r="4.500"/><circle cx="1089.300" cy="689.700" r="4.500"/><circle cx="1333.300" cy="659" r="4.500"/><circle cx="1333.300" cy="521.700" r="4.500"/><circle cx="713.300" cy="659" r="4.500"/><circle cx="760.700" cy="590.300" r="4.500"/><circle cx="1285.700" cy="590.300" r="4.500"/></g>
        <g class="pt-g"><circle cx="713.300" cy="521.700" r="3"/><circle cx="944.300" cy="447.300" r="3"/><circle cx="944.300" cy="733.700" r="3"/><circle cx="957.700" cy="689.700" r="3"/><circle cx="1102.700" cy="447.300" r="3"/><circle cx="1102.700" cy="733.700" r="3"/><circle cx="1089.300" cy="490.700" r="3"/><circle cx="1089.300" cy="689.700" r="3"/><circle cx="1333.300" cy="659" r="3"/><circle cx="1333.300" cy="521.700" r="3"/><circle cx="713.300" cy="659" r="3"/><circle cx="760.700" cy="590.300" r="3"/><circle cx="1285.700" cy="590.300" r="3"/><circle cx="736.700" cy="447.300" r="2.600"/><circle cx="736.700" cy="733.700" r="2.600"/><circle cx="1309.300" cy="447.300" r="2.600"/><circle cx="1309.300" cy="733.700" r="2.600"/><circle cx="713.300" cy="471.300" r="2.600"/><circle cx="713.300" cy="710" r="2.600"/><circle cx="1333.300" cy="471.300" r="2.600"/><circle cx="1333.300" cy="710" r="2.600"/><circle cx="944.300" cy="471.300" r="2.600"/><circle cx="944.300" cy="710" r="2.600"/><circle cx="1102.700" cy="471.300" r="2.600"/><circle cx="1102.700" cy="710" r="2.600"/><circle cx="1023.300" cy="590.300" r="2.800"/></g>
        <g class="pt-b"><circle cx="958.500" cy="718" r="2.200"/><circle cx="958.500" cy="724" r="2.200"/><circle cx="969.500" cy="728" r="2.200"/><circle cx="969.500" cy="734" r="2.200"/><circle cx="975" cy="722" r="2.200"/><circle cx="1073" cy="722" r="2.200"/><circle cx="1077" cy="728" r="2.200"/><circle cx="1077" cy="734" r="2.200"/><circle cx="1088" cy="717" r="2.200"/><circle cx="1088" cy="724" r="2.200"/><circle cx="1092" cy="729" r="2.200"/><circle cx="972" cy="473" r="2.200"/></g>
        <rect x="954.500" y="488" width="5" height="5" class="brown"/>
        <path class="ghost-l" d="M957 488V470M960 491H976"/>
        <g class="tgt"><circle cx="713.300" cy="733.700" r="6"/><circle cx="1333.300" cy="447.300" r="6"/><circle cx="1333.300" cy="733.700" r="6"/><path d="M704 733.700H722M713.300 725V742M1324 447.300H1343M1333.300 438V456M1324 733.700H1343M1333.300 725V742M944.300 437V458"/></g>

        <!-- dimensions text -->
        <text class="dt" x="716" y="477" textLength="47" lengthAdjust="spacingAndGlyphs">Rp35:1.0</text>
        <text class="dt" x="716" y="716" textLength="46" lengthAdjust="spacingAndGlyphs">Rp38:1.0</text>
        <text class="dt" x="1287" y="716" textLength="47" lengthAdjust="spacingAndGlyphs">Rp37:1.0</text>
        <text class="dt" x="1389" y="775" textLength="47" lengthAdjust="spacingAndGlyphs">p28:26.0</text>
        <text class="dt" x="1270" y="596" textLength="47" lengthAdjust="spacingAndGlyphs">Rp32:3.5</text>
        <text class="dt" x="1367" y="597" textLength="48" lengthAdjust="spacingAndGlyphs">p34:10.0</text>
        <text class="dt" x="1349" y="596" textLength="13" lengthAdjust="spacingAndGlyphs">Φ</text>
        <text class="dt" transform="translate(1375 403) rotate(-90)" textLength="46" lengthAdjust="spacingAndGlyphs">p29: 2.0</text>
        <text class="dt" transform="translate(746 613) rotate(-62)" textLength="46" lengthAdjust="spacingAndGlyphs">Rp31:3.5</text>
        <text class="dt" transform="translate(1263 546) rotate(-58)" textLength="46" lengthAdjust="spacingAndGlyphs">Rp36:1.0</text>
        <text class="dt" transform="translate(888 519) rotate(-45)" textLength="64" lengthAdjust="spacingAndGlyphs">Φ p33:2.0</text>

        <!-- small triad -->
        <rect x="427" y="875" width="25" height="24" class="mini-sq"/>
        <path d="M425.700 900V870" class="mini-y"/><path d="M425.700 858 423 871H428.500Z" class="ygreen"/>
        <path d="M428 900H455" class="mini-x"/><path d="M468 900 455 897V903Z" class="xred"/>
        <rect x="423" y="896" width="7" height="8" class="mini-o"/>
        <text x="425.700" y="857" class="lbl lbl-mg">Y</text>
        <text x="473" y="904" class="lbl lbl-mr">X</text>
      </svg>
    </div>
  </div>
</main>

<footer class="status"><span class="st-left">选择要约束的对象</span><span class="st-mid">草图需要 1 个约束</span></footer>
<div class="teal-strip"></div>

<aside class="dialog">
  <div class="dlg-title"><svg class="dlg-gear"><use href="#gear"/></svg><span class="dlg-name">几何约束</span><svg class="dlg-r" viewBox="0 0 14 14"><path d="M3 3A6 6 0 1 0 11 2.500M11 1V5H7" fill="none" stroke="#fff" stroke-width="1.800"/></svg><svg class="dlg-x" viewBox="0 0 14 14"><path d="M2 2 12 12M12 2 2 12" stroke="#fff" stroke-width="2"/></svg></div>

  <div class="panel p-con">
    <div class="phead"><span>约束</span><svg class="chev"><use href="#cu"/></svg></div>
    <div class="cgrid">
      <span><svg><use href="#c-coin"/></svg></span><span><svg><use href="#c-onc"/></svg></span><span><svg><use href="#c-tan"/></svg></span><span><svg><use href="#c-par"/></svg></span><span><svg><use href="#c-perp"/></svg></span><span><svg><use href="#c-hor"/></svg></span><span><svg><use href="#c-ver"/></svg></span>
      <span><svg><use href="#c-hal"/></svg></span><span><svg><use href="#c-val"/></svg></span><span><svg><use href="#c-mid"/></svg></span><span><svg><use href="#c-col"/></svg></span><span><svg><use href="#c-con"/></svg></span><span class="c-sel"><svg><use href="#c-eq"/></svg></span><span><svg><use href="#c-eqr"/></svg></span>
    </div>
  </div>

  <div class="panel p-geo">
    <div class="phead"><span>要约束的几何体</span><svg class="chev"><use href="#cu"/></svg></div>
    <div class="selrow"><div class="sel-main sel-on"><b class="star">✱</b><span>选择要约束的对象 (0)</span></div><div class="sel-btn sel-btn-y"><svg><use href="#cross"/></svg></div></div>
    <div class="selrow"><div class="sel-main"><b class="star">✱</b><span>选择要约束到的对象 (0)</span></div><div class="sel-btn sel-btn-b"><svg><use href="#cross"/></svg></div></div>
    <div class="autorow"><i class="cb"></i><span>自动选择递进</span></div>
  </div>

  <div class="panel p-set">
    <div class="phead phead-set"><span>设置</span><svg class="chev"><use href="#cu"/></svg></div>
    <div class="lab">启用的约束：</div>
    <div class="opt"><i class="cb on"></i><svg><use href="#c-coin"/></svg><span>重合</span></div>
    <div class="opt"><i class="cb on"></i><svg><use href="#c-onc"/></svg><span>点在曲线上</span></div>
    <div class="opt"><i class="cb on"></i><svg><use href="#c-tan"/></svg><span>相切</span></div>
    <div class="opt"><i class="cb on"></i><svg><use href="#c-par"/></svg><span>平行</span></div>
    <div class="opt"><i class="cb on"></i><svg><use href="#c-perp"/></svg><span>垂直</span></div>
    <div class="opt"><i class="cb on"></i><svg><use href="#c-hor"/></svg><span>水平</span></div>
    <div class="opt"><i class="cb on"></i><svg><use href="#c-ver"/></svg><span>竖直</span></div>
    <div class="opt"><i class="cb on"></i><svg><use href="#c-hal"/></svg><span>水平对齐</span></div>
    <div class="opt"><i class="cb on"></i><svg><use href="#c-val"/></svg><span>竖直对齐</span></div>
    <div class="opt"><i class="cb on"></i><svg><use href="#c-mid"/></svg><span>中点</span></div>
    <div class="opt"><i class="cb on"></i><svg><use href="#c-col"/></svg><span>共线</span></div>
    <div class="opt"><i class="cb on"></i><svg><use href="#c-con"/></svg><span>同心</span></div>
    <div class="opt"><i class="cb on"></i><svg><use href="#c-eq"/></svg><span>等长</span></div>
    <div class="opt"><i class="cb on"></i><svg><use href="#c-eqr"/></svg><span>等半径</span></div>
    <div class="opt"><i class="cb"></i><svg><use href="#c-fix"/></svg><span>固定</span></div>
    <div class="opt"><i class="cb"></i><svg><use href="#c-ffx"/></svg><span>完全固定</span></div>
    <div class="opt"><i class="cb"></i><svg><use href="#c-ang"/></svg><span>定角</span></div>
    <div class="opt"><i class="cb"></i><svg><use href="#c-len"/></svg><span>定长</span></div>
    <div class="opt"><i class="cb"></i><svg><use href="#c-ons"/></svg><span>点在线串上</span></div>
    <div class="opt"><i class="cb"></i><svg><use href="#c-tns"/></svg><span>与线串相切</span></div>
    <div class="opt"><i class="cb"></i><svg><use href="#c-pns"/></svg><span>垂直于线串</span></div>
    <div class="opt"><i class="cb"></i><svg><use href="#c-nus"/></svg><span>非均匀比例</span></div>
    <div class="opt"><i class="cb"></i><svg><use href="#c-uni"/></svg><span>均匀比例</span></div>
    <div class="opt"><i class="cb"></i><svg><use href="#c-slp"/></svg><span>曲线的斜率</span></div>
  </div>
  <div class="dlg-foot"><button class="btn-close">关闭</button></div>
</aside>

<div class="watermark">
  <svg viewBox="0 0 72 82" class="wm-hex"><path d="M36 0 71 20V61L36 82 1 61V20Z" fill="#5ab4ea" opacity=".62"/><path d="M36 0 71 20 52 30 36 22Z" fill="#fff" opacity=".45"/><path d="M1 20 36 0V22L20 31V50L1 61Z" fill="#fff" opacity=".28"/><path d="M36 22 52 31V50L36 60 20 50V31Z" fill="none" stroke="#fff" stroke-width="2.500" opacity=".8"/><path d="M36 26 49 33V48L36 56 23 48V33Z" fill="#4fa8e4" opacity=".5"/></svg>
  <span class="wm-text">WWW.3DSJW.COM</span>
</div>
</body>
</html>
```
FILE: styles.css
```css
* { box-sizing: border-box; }
html, body { margin: 0; padding: 0; }
body {
  width: 1833px; height: 995px; overflow: hidden; position: relative;
  display: flex; flex-direction: column;
  font-family: "Noto Sans CJK SC", "Liberation Sans", sans-serif;
  font-size: 12px; line-height: 16px; color: #222; background: #fff;
}
i { font-style: normal; display: block; }
svg { display: block; flex: none; }
.sprite { position: absolute; width: 0; height: 0; overflow: hidden; }
.sep { width: 1px; height: 22px; background: #d4d4d4; flex: none; }

.dr { fill: #222; }
.dr-8 { width: 8px; height: 8px; }
.dr-12 { width: 12px; height: 8px; }

/* title bar */
.titlebar { height: 30px; display: flex; align-items: center; flex: none; padding-left: 5px; }
.nx { width: 37px; font: 700 24px/30px "Liberation Sans", sans-serif; color: #7b96a8; }
.qi { width: 24px; display: flex; justify-content: center; flex: none; }
.qi-first { margin-left: 5px; }
.qi-22 { width: 22px; } .qi-26 { width: 26px; } .qi-29 { width: 29px; } .qi-30 { width: 30px; }
.ic16 { width: 16px; height: 16px; }
.ic18 { width: 20px; height: 18px; }
.tb-text { font-size: 11px; flex: none; }
.tb-text-1 { margin-left: 4px; }
.tb-text-2 { margin-left: 3px; }
.win-ic { width: 14px; height: 17px; margin-left: 8px; border: 1.500px solid #1414e0; background: linear-gradient(#e8f0f8, #7fa0c0); flex: none; }
.more { width: 10px; display: flex; justify-content: center; }
.app-title { margin-left: 570px; font-size: 12px; }
.siemens { margin-left: auto; font: 700 13px/16px "Liberation Sans", sans-serif; letter-spacing: .6px; color: #009a9a; }
.winbtn-min { width: 8px; height: 2px; background: #444; margin: 10px 0 0 22px; flex: none; }
.winbtn-max { width: 12px; height: 12px; border: 1.500px solid #444; margin-left: 18px; margin-top: -2px; flex: none; }
.winbtn-close { width: 12px; height: 12px; margin-left: 11px; margin-right: 5px; margin-top: -3px; }

/* tabs */
.tabbar { height: 28px; background: #dcdcdc; display: flex; align-items: flex-end; flex: none; padding-left: 1px; }
.tab-task { width: 81px; height: 28px; background: #55a0b8; color: #fff; font-size: 13px; line-height: 27px; text-align: center; margin-right: 1px; }
.tab { width: 52px; height: 27px; font-size: 13px; line-height: 27px; text-align: center; }
.tab-active { width: 53px; background: #fff; color: #0a6c88; border-top: 1px solid #c8c8c8; }
.search { margin-left: auto; width: 124px; height: 20px; margin-bottom: 5px; background: #fff; border: 1px solid #aaa; display: flex; align-items: center; padding-left: 2px; font-size: 11px; color: #aaa; justify-content: space-between; padding-right: 1px; }
.search svg { width: 16px; height: 16px; }
.tb-ic { width: 16px; height: 16px; margin: 0 0 7px 11px; }
.tb-help { margin-right: 5px; }
.help-q { font: 700 12px "Liberation Sans", sans-serif; fill: #fff; }

/* ribbon */
.ribbon { height: 94px; flex: none; display: flex; border-bottom: 1px solid #dcdcdc; }
.group { display: flex; flex-direction: column; border-right: 1px solid #d8d8d8; margin: 5px 0 4px; }
.g-sketch { width: 217px; }
.g-curve { width: 731px; }
.g-con { width: 248px; }
.gbody { height: 67px; display: flex; align-items: flex-start; }
.gfoot { display: flex; align-items: center; height: 16px; margin-top: 4px; font-size: 11px; color: #0a7a9c; }
.foot-sketch { padding: 0 7px 0 89px; }
.foot-curve { padding: 0 6px 0 345px; }
.foot-con { padding: 0 6px 0 101px; }
.dr-f { width: 9px; height: 8px; margin-left: auto; }
.dr-end { width: 9px; height: 8px; margin-left: auto; margin-right: 2px; align-self: flex-end; margin-bottom: 6px; }

.tool { display: flex; flex-direction: column; align-items: center; flex: none; font-size: 11px; }
.ticon { width: 36px; height: 34px; }
.tlabel { margin-top: 3px; line-height: 14px; white-space: nowrap; }
.tlabel-off { color: #bcbcbc; }
.t-finish { width: 44px; margin-left: 8px; }
.t-update { width: 50px; margin-left: 4px; }
.t-40 { width: 40px; } .t-44 { width: 44px; } .t-38 { width: 38px; } .t-52 { width: 52px; }
.g-curve .t-40:first-child { margin-left: 8px; }
.t-trim { margin-left: 9px; }
.dr-t { width: 8px; height: 8px; margin-top: 4px; }
.tool-on { width: 73px; margin-left: 2px; }
.on-bg { width: 73px; height: 39px; margin-top: -3px; padding-top: 3px; display: flex; justify-content: center; background: #c7e3ea; box-shadow: inset 0 0 0 1px #a5d2de; }
.tool-on .tlabel { margin-top: 1px; }
.g-con .t-52:first-child { margin-left: 9px; }

.sk-col { width: 98px; margin-left: 3px; display: flex; flex-direction: column; font-size: 11px; }
.select { display: flex; align-items: center; justify-content: space-between; border: 1px solid #999; background: #fff; font-size: 11px; padding: 0 4px 0 3px; height: 21px; flex: none; }
.select svg { width: 10px; height: 8px; }
.select-sk { height: 20px; margin-top: 1px; }
.sk-item { display: flex; align-items: center; height: 22px; gap: 4px; }
.sk-item:nth-child(2) { margin-top: 4px; }
.sk-item svg { width: 16px; height: 16px; }

.gallery { border: 1px solid #ddd; height: 65px; flex: none; display: grid; grid-auto-rows: 22px; font-size: 11px; }
.gal-1 { width: 187px; margin-left: 10px; grid-template-columns: 91px 91px; }
.gal-2 { width: 124px; margin-left: 10px; grid-template-columns: 1fr; }
.gal-item { display: flex; align-items: center; padding: 0 0 4px 4px; gap: 4px; }
.gal-item svg { width: 14px; height: 14px; }
.gal-1 .gal-item:nth-child(even) svg { margin-right: 2px; }
.gal-arrows { height: 65px; display: flex; flex-direction: column; align-items: center; justify-content: space-around; }
.gal-arrows svg { width: 8px; height: 8px; }
.gal-arrows-1 { width: 14px; }
.gal-arrows-2 { width: 18px; }
.gal-arrows .up { transform: rotate(180deg); opacity: .3; }
.gal-arrows .mr { border-top: 1px solid #222; }

/* selection bar */
.selbar { height: 32px; flex: none; display: flex; align-items: center; border-bottom: 2px solid #9a9a9a; padding-left: 10px; }
.menu-ic { width: 20px; height: 17px; }
.menu-text { width: 41px; margin-left: 1px; font-size: 11px; }
.sep-menu { margin-left: 3px; margin-right: 12px; }
.select-f1 { width: 132px; padding-left: 2px; }
.select-f2 { width: 139px; margin-left: 9px; padding-left: 2px; }
.si { width: 24px; height: 25px; display: flex; align-items: center; justify-content: center; flex: none; }
.si svg { width: 18px; height: 18px; }
.si-first { margin-left: 6px; }
.si-m1 { margin-left: 1px; } .si-m2 { margin-left: 2px; } .si-m6 { margin-left: 6px; } .si-m7 { margin-left: 7px; }
.si-on { background: #c7e3ea; box-shadow: inset 0 0 0 1px #a5d2de; }
.sep-s { margin-left: 7px; }
.selbar .dr-end { margin-bottom: 0; align-self: center; }

/* workspace */
.workspace { height: 780px; display: flex; flex: none; }
.rail { width: 33px; flex: none; background: #dcdcdc; border-left: 1px solid #bdbdbd; border-right: 1px solid #b0b0b0; display: flex; flex-direction: column; align-items: center; }
.rail-item { width: 100%; display: flex; justify-content: center; flex: none; }
.rail-item svg { width: 24px; height: 26px; }
.ri-gear { height: 30px; padding-top: 5px; color: #444; }
.rail-gear.rail-gear { width: 14px; height: 14px; }
.ri-asm { height: 52px; padding-top: 18px; }
.ri-con { height: 42px; padding-top: 10px; }
.ri-part { height: 45px; width: 31px; margin-left: 2px; margin-right: -1px; background: #fff; border: 1px solid #b8b8b8; border-right: 0; padding-top: 9px; }
.ri-books { height: 38px; padding-top: 8px; }
.ri-info { height: 54px; padding-top: 23px; }
.ri-doc { height: 54px; padding-top: 23px; }
.ri-clock { height: 54px; padding-top: 22px; }
.ri-robot { height: 42px; padding-top: 10px; }

/* navigator */
.nav { width: 332px; flex: none; border-right: 2px solid #a0a0a0; display: flex; flex-direction: column; background: #fff; }
.nav-title { height: 29px; display: flex; align-items: center; justify-content: space-between; padding: 0 15px 0 10px; }
.nav-max { width: 12px; height: 10px; border: 1px solid #222; border-top-width: 2px; }
.tree { width: 314px; height: 458px; margin-left: 7px; border: 1px solid #ddd; border-right-width: 2px; display: flex; flex-direction: column; overflow: hidden; }
.tree-head { height: 21px; display: flex; background: #f0f0f0; border-bottom: 1px solid #ddd; flex: none; color: #333; }
.hc { display: flex; align-items: center; border-right: 2px solid #dcdcdc; padding-left: 6px; flex: none; }
.hc-name { width: 200px; }
.hc-new { width: 100px; }
.hc-x { width: 14px; border: 0; overflow: hidden; white-space: nowrap; }
.sort { width: 0; height: 0; margin-left: 16px; border: 5px solid transparent; border-bottom: 5px solid #222; border-top: 0; }
.tree-body { flex: 1; position: relative; display: flex; flex-direction: column; min-height: 0; }
.guide { position: absolute; border-left: 1px dotted #888; }
.guide-1 { left: 9px; top: 10px; height: 40px; }
.guide-2 { left: 28px; top: 60px; height: 151px; }
.row { height: 20px; display: flex; flex: none; border-bottom: 1px solid #eee; }
.alt { background: #f8f8f8; }
.row-fill { flex: 1; display: flex; }
.c1 { width: 200px; border-right: 1px solid #e6e6e6; display: flex; align-items: center; padding-left: 5px; flex: none; position: relative; }
.c1-ch { padding-left: 29px; }
.c2 { width: 100px; border-right: 1px solid #e6e6e6; display: flex; align-items: center; padding-left: 6px; flex: none; }
.c3 { flex: 1; }
.exp { width: 9px; height: 9px; border: 1px solid #aaa; background: #fff; font: 400 9px/7px "Liberation Sans", sans-serif; text-align: center; flex: none; position: relative; z-index: 1; }
.stub { border-bottom: 1px dotted #888; height: 1px; flex: none; }
.stub-6 { width: 6px; }
.stub-10 { width: 11px; }
.ric { width: 15px; height: 15px; }
.ric-cam { margin-left: 3px; }
.ric-act { outline: 1px dashed #1e90e0; }
.rtxt { margin: 0 0 2px 3px; white-space: nowrap; }
.rtxt-off { color: #aaa; }
.rtxt-b { font-weight: 700; }
.ck-s { width: 13px; height: 13px; }
.vis { width: 13px; height: 13px; border: 1px solid #222; background: #fff; flex: none; margin-right: 2px; }
.vis svg { width: 11px; height: 11px; }
.hscroll { height: 16px; flex: none; background: #f0f0f0; display: flex; align-items: center; margin: 0 0 1px 0; }
.sb-arrow { width: 8px; height: 10px; margin: 0 5px 0 4px; }
.sb-arrow-r { margin: 0 4px 0 auto; }
.sb-thumb { width: 216px; height: 16px; background: #cacaca; }
.splitter { width: 316px; height: 5px; margin: 1px 0 0 6px; background: #eee; border: 1px solid #aaa; flex: none; }
.nav-sec { width: 316px; height: 24px; margin-left: 6px; padding: 2px 5px 0 7px; display: flex; align-items: center; justify-content: space-between; font-size: 14px; color: #0a6c88; border-bottom: 2px solid #d8d8d8; flex: none; }
.nav-sec-2 { height: 25px; border-bottom-width: 3px; }
.chev { width: 12px; height: 8px; }
.preview { width: 316px; height: 231px; margin-left: 6px; border: 1px solid #dcdcdc; border-top: 0; flex: none; }
.preview-head { height: 27px; padding: 0 5px 6px 7px; display: flex; align-items: center; justify-content: space-between; font-size: 14px; color: #0a6c88; }
.preview-box { width: 247px; height: 185px; margin-left: 34px; border: 1px solid #dcdcdc; display: flex; align-items: center; justify-content: center; padding: 0 2px 2px 0; }

/* stage */
.stage { flex: 1; display: flex; flex-direction: column; min-width: 0; }
.doctabs { height: 23px; flex: none; border-bottom: 2px solid #55a0b8; }
.doctab { width: 133px; height: 21px; background: #55a0b8; display: flex; align-items: center; padding-left: 7px; color: #fff; font-size: 12px; }
.doc-ic { width: 14px; height: 14px; }
.doc-name { margin-left: 6px; width: 74px; }
.doc-s { width: 10px; height: 10px; margin-right: 6px; }
.canvas { flex: 1; background: #d2d3d5; min-height: 0; }
.sketch { width: 1468px; height: 757px; }

.plate { fill: #ffa500; stroke: #3b4a80; stroke-width: 1.500; }
.bigc { fill: none; stroke: #4a3a20; stroke-width: 1; }
.hole { fill: #d2d3d5; stroke: #24408f; stroke-width: 1.500; }
.csq { fill: #a8b6c2; stroke: #1ea0ff; stroke-width: 2.200; }
.axis-dash { fill: none; stroke: #1fe01f; stroke-width: 2; stroke-dasharray: 9 6; }
.ghost path { fill: none; stroke: #f2e4c8; stroke-width: 1; }
.dim-d { fill: none; stroke: #3b5fb5; stroke-width: 1; stroke-dasharray: 2.500 1.500; }
.dim path { fill: none; stroke: #4a6dbd; stroke-width: 1; }
.dim-a { fill: #3c68c0; }
.bars path { fill: none; stroke: #4a6dbd; stroke-width: 1.500; }
.eqm path { fill: none; stroke: #5a6fa5; stroke-width: 1.500; }
.eqm-b path { fill: none; stroke: #968c6e; stroke-width: 1.200; }
.outline path { fill: none; stroke: #6cc800; stroke-width: 2.200; }
.yaxis { stroke: #2e8b3a; stroke-width: 4; }
.ygreen { fill: #2e8b3a; }
.xaxis { stroke: #d8383c; stroke-width: 3; }
.xred { fill: #d8383c; }
.ghost-l { fill: none; stroke: #f0e8d8; stroke-width: 1; opacity: .8; }
.ghost-f { fill: #e2e2e2; }
.o-mark { fill: none; stroke: #2a50c0; stroke-width: 1.500; }
.lbl { font: 400 13px "Liberation Sans", sans-serif; text-anchor: middle; }
.lbl-gh { fill: #f2ead8; }
.lbl-gr { fill: #3a9a48; }
.lbl-r { fill: #e03030; }
.lbl-mg { fill: #3a9a48; font-size: 12px; }
.lbl-mr { fill: #d83040; font-size: 12px; }
.pt-o circle { fill: #4a74b8; }
.pt-g circle { fill: #66cc00; }
.pt-b circle { fill: #3a63c0; }
.brown { fill: #9a6a40; }
.tgt circle { fill: none; stroke: #4a6dbd; stroke-width: 1.200; }
.tgt path { fill: none; stroke: #4a6dbd; stroke-width: 1; }
.dt { font: 400 17px "Liberation Sans", sans-serif; fill: #5272bb; }
.mini-sq { fill: #d8d8d8; stroke: #b4b4b4; stroke-width: 1; }
.mini-y { stroke: #2e8b3a; stroke-width: 1.500; }
.mini-x { stroke: #c84040; stroke-width: 1.500; }
.mini-o { fill: #1450e8; }

/* status */
.status { height: 22px; flex: none; border-top: 1px solid #999; display: flex; align-items: center; padding: 0 0 3px 4px; font-size: 11px; font-weight: 500; color: #111; }
.st-mid { margin-left: 773px; }
.teal-strip { height: 9px; flex: none; background: #55a0b8; border-bottom: 1px solid #667; }

/* dialog */
.dialog { position: absolute; left: 1483px; top: 67px; width: 328px; height: 928px; background: #efefef; display: flex; flex-direction: column; border-right: 1px solid #ddd; }
.dlg-title { height: 24px; background: #55a0b8; color: #fff; display: flex; align-items: center; padding-left: 7px; font-size: 14px; flex: none; }
.dlg-gear { width: 14px; height: 14px; color: #fff; }
.dlg-name { margin-left: 8px; }
.dlg-r { width: 14px; height: 14px; margin-left: auto; }
.dlg-x { width: 14px; height: 14px; margin: 0 8px 0 7px; }
.panel { width: 316px; margin-left: 6px; background: #fff; border-bottom: 2px solid #cfcfcf; flex: none; }
.p-con { height: 115px; margin-top: 4px; }
.p-geo { height: 128px; margin-top: 4px; }
.p-set { height: 611px; margin-top: 3px; }
.phead { height: 30px; padding: 0 6px 6px 7px; display: flex; align-items: center; justify-content: space-between; font-size: 14px; color: #0a6c88; }
.cgrid { width: 298px; height: 77px; margin-left: 9px; background: #efefef; border: 1px solid #dcdcdc; padding: 4px 0 0 3px; display: grid; grid-template-columns: repeat(7, 34.4px); grid-template-rows: 35px 33px; }
.cgrid span { display: flex; align-items: center; justify-content: center; }
.cgrid svg { width: 24px; height: 24px; }
.c-sel { background: #8cc3d5; outline: 1px dotted #111; outline-offset: -3px; }
.selrow { display: flex; height: 32px; margin: 0 0 2px 9px; }
.sel-main { width: 264px; display: flex; align-items: center; padding: 0 0 2px 2px; font-size: 12px; }
.sel-on { background: #ffdf73; }
.star { color: #e01010; font-size: 14px; margin-right: 6px; font-weight: 700; line-height: 16px; }
.sel-btn { width: 32px; margin-left: 2px; display: flex; align-items: center; justify-content: center; }
.sel-btn svg { width: 22px; height: 22px; }
.sel-btn-y { background: #ffdf73; }
.sel-btn-b { background: #6fb0c6; }
.autorow { display: flex; align-items: center; height: 24px; margin-left: 9px; gap: 4px; }
.autorow span { margin-bottom: 3px; }
.cb { width: 13px; height: 13px; border: 1px solid #333; background: #fff; flex: none; position: relative; }
.cb.on::after { content: ""; position: absolute; left: 2px; top: 1px; width: 7px; height: 4px; border-left: 1.300px solid #444; border-bottom: 1.300px solid #444; transform: rotate(-45deg); }
.lab { height: 22px; padding: 0 0 2px 9px; display: flex; align-items: center; }
.phead-set { height: 30px; padding-bottom: 7px; }
.opt { height: 23px; display: flex; align-items: center; padding-left: 9px; }
.opt svg { width: 16px; height: 16px; margin-left: 9px; margin-right: 1px; }
.opt span { margin-bottom: 2px; }
.dlg-foot { flex: 1; display: flex; justify-content: flex-end; align-items: flex-start; padding: 10px 15px 0 0; }
.btn-close { width: 54px; height: 25px; background: #e4e4e4; border: 1px solid #aaa; font: 400 12px/16px "Noto Sans CJK SC", sans-serif; color: #222; padding: 0; }

/* watermark */
.watermark { position: absolute; left: 1551px; top: 900px; display: flex; align-items: flex-end; pointer-events: none; }
.wm-hex { width: 72px; height: 82px; }
.wm-text { margin: 0 0 10px 9px; font: 700 13px/16px "Liberation Sans", sans-serif; letter-spacing: 1.900px; color: rgba(255, 255, 255, .55); white-space: nowrap; }
```
